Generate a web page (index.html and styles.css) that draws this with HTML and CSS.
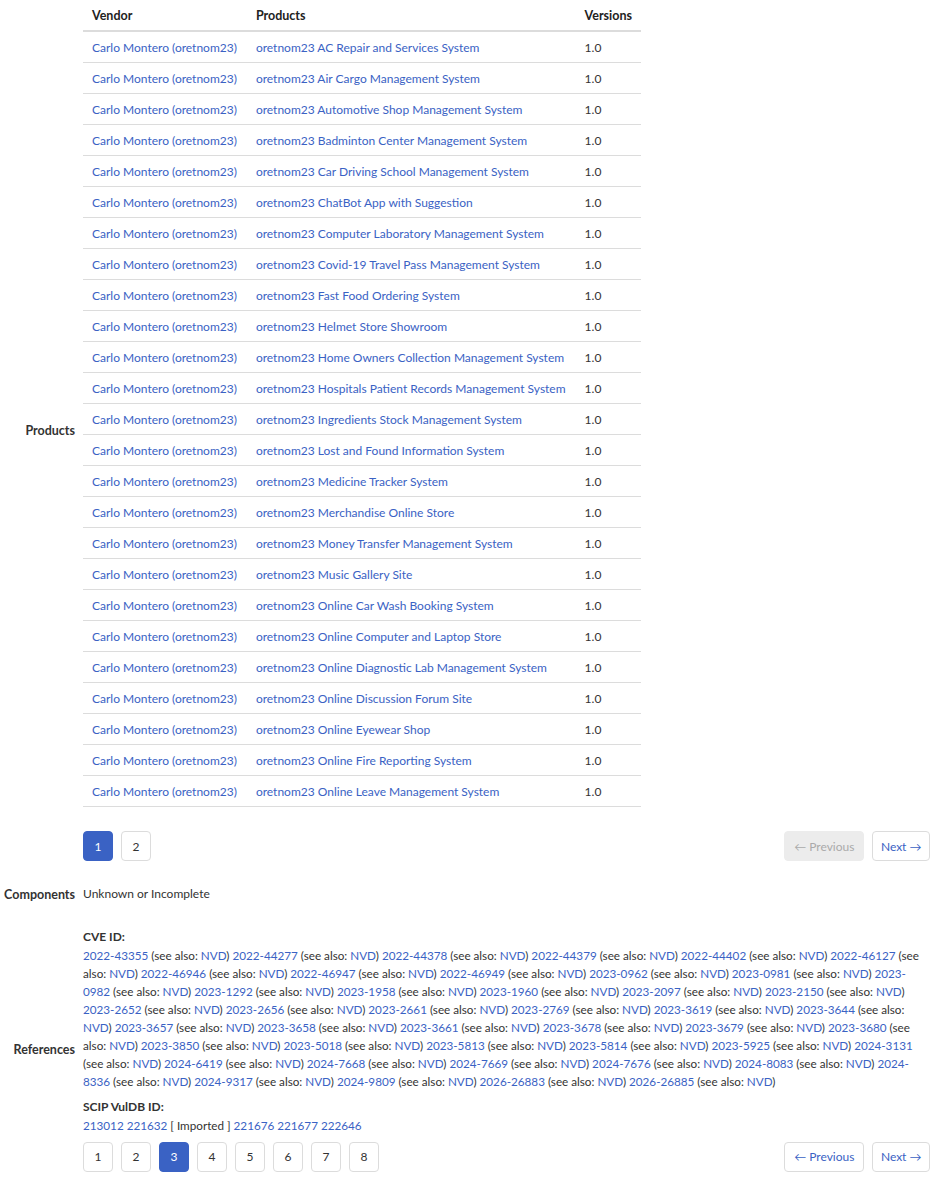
FILE: index.html
```html
<!DOCTYPE html>
<html>
<head>
<meta charset="utf-8">
<link rel="stylesheet" href="styles.css">
</head>
<body>
<div class="details">
  <div class="label">Products</div>
  <div class="value">
    <table class="products">
      <thead>
        <tr><th class="c-vendor">Vendor</th><th class="c-product">Products</th><th class="c-version">Versions</th></tr>
      </thead>
      <tbody>
        <tr><td><a href="#">Carlo Montero (oretnom23)</a></td><td><a href="#">oretnom23 AC Repair and Services System</a></td><td>1.0</td></tr>
        <tr><td><a href="#">Carlo Montero (oretnom23)</a></td><td><a href="#">oretnom23 Air Cargo Management System</a></td><td>1.0</td></tr>
        <tr><td><a href="#">Carlo Montero (oretnom23)</a></td><td><a href="#">oretnom23 Automotive Shop Management System</a></td><td>1.0</td></tr>
        <tr><td><a href="#">Carlo Montero (oretnom23)</a></td><td><a href="#">oretnom23 Badminton Center Management System</a></td><td>1.0</td></tr>
        <tr><td><a href="#">Carlo Montero (oretnom23)</a></td><td><a href="#">oretnom23 Car Driving School Management System</a></td><td>1.0</td></tr>
        <tr><td><a href="#">Carlo Montero (oretnom23)</a></td><td><a href="#">oretnom23 ChatBot App with Suggestion</a></td><td>1.0</td></tr>
        <tr><td><a href="#">Carlo Montero (oretnom23)</a></td><td><a href="#">oretnom23 Computer Laboratory Management System</a></td><td>1.0</td></tr>
        <tr><td><a href="#">Carlo Montero (oretnom23)</a></td><td><a href="#">oretnom23 Covid-19 Travel Pass Management System</a></td><td>1.0</td></tr>
        <tr><td><a href="#">Carlo Montero (oretnom23)</a></td><td><a href="#">oretnom23 Fast Food Ordering System</a></td><td>1.0</td></tr>
        <tr><td><a href="#">Carlo Montero (oretnom23)</a></td><td><a href="#">oretnom23 Helmet Store Showroom</a></td><td>1.0</td></tr>
        <tr><td><a href="#">Carlo Montero (oretnom23)</a></td><td><a href="#">oretnom23 Home Owners Collection Management System</a></td><td>1.0</td></tr>
        <tr><td><a href="#">Carlo Montero (oretnom23)</a></td><td><a href="#">oretnom23 Hospitals Patient Records Management System</a></td><td>1.0</td></tr>
        <tr><td><a href="#">Carlo Montero (oretnom23)</a></td><td><a href="#">oretnom23 Ingredients Stock Management System</a></td><td>1.0</td></tr>
        <tr><td><a href="#">Carlo Montero (oretnom23)</a></td><td><a href="#">oretnom23 Lost and Found Information System</a></td><td>1.0</td></tr>
        <tr><td><a href="#">Carlo Montero (oretnom23)</a></td><td><a href="#">oretnom23 Medicine Tracker System</a></td><td>1.0</td></tr>
        <tr><td><a href="#">Carlo Montero (oretnom23)</a></td><td><a href="#">oretnom23 Merchandise Online Store</a></td><td>1.0</td></tr>
        <tr><td><a href="#">Carlo Montero (oretnom23)</a></td><td><a href="#">oretnom23 Money Transfer Management System</a></td><td>1.0</td></tr>
        <tr><td><a href="#">Carlo Montero (oretnom23)</a></td><td><a href="#">oretnom23 Music Gallery Site</a></td><td>1.0</td></tr>
        <tr><td><a href="#">Carlo Montero (oretnom23)</a></td><td><a href="#">oretnom23 Online Car Wash Booking System</a></td><td>1.0</td></tr>
        <tr><td><a href="#">Carlo Montero (oretnom23)</a></td><td><a href="#">oretnom23 Online Computer and Laptop Store</a></td><td>1.0</td></tr>
        <tr><td><a href="#">Carlo Montero (oretnom23)</a></td><td><a href="#">oretnom23 Online Diagnostic Lab Management System</a></td><td>1.0</td></tr>
        <tr><td><a href="#">Carlo Montero (oretnom23)</a></td><td><a href="#">oretnom23 Online Discussion Forum Site</a></td><td>1.0</td></tr>
        <tr><td><a href="#">Carlo Montero (oretnom23)</a></td><td><a href="#">oretnom23 Online Eyewear Shop</a></td><td>1.0</td></tr>
        <tr><td><a href="#">Carlo Montero (oretnom23)</a></td><td><a href="#">oretnom23 Online Fire Reporting System</a></td><td>1.0</td></tr>
        <tr><td><a href="#">Carlo Montero (oretnom23)</a></td><td><a href="#">oretnom23 Online Leave Management System</a></td><td>1.0</td></tr>
      </tbody>
    </table>
    <div class="pager">
      <div class="pages">
        <a class="page active" href="#">1</a>
        <a class="page" href="#">2</a>
      </div>
      <div class="nav">
        <span class="navbtn disabled">← Previous</span>
        <a class="navbtn next" href="#">Next →</a>
      </div>
    </div>
  </div>

  <div class="label">Components</div>
  <div class="value plain">Unknown or Incomplete</div>

  <div class="label">References</div>
  <div class="value refs">
    <div class="ref-title">CVE ID:</div>
    <div class="ref-list"><a href="#">2022-43355</a> (see also: <a href="#">NVD</a>) <a href="#">2022-44277</a> (see also: <a href="#">NVD</a>) <a href="#">2022-44378</a> (see also: <a href="#">NVD</a>) <a href="#">2022-44379</a> (see also: <a href="#">NVD</a>) <a href="#">2022-44402</a> (see also: <a href="#">NVD</a>) <a href="#">2022-46127</a> (see also: <a href="#">NVD</a>) <a href="#">2022-46946</a> (see also: <a href="#">NVD</a>) <a href="#">2022-46947</a> (see also: <a href="#">NVD</a>) <a href="#">2022-46949</a> (see also: <a href="#">NVD</a>) <a href="#">2023-0962</a> (see also: <a href="#">NVD</a>) <a href="#">2023-0981</a> (see also: <a href="#">NVD</a>) <a href="#">2023-0982</a> (see also: <a href="#">NVD</a>) <a href="#">2023-1292</a> (see also: <a href="#">NVD</a>) <a href="#">2023-1958</a> (see also: <a href="#">NVD</a>) <a href="#">2023-1960</a> (see also: <a href="#">NVD</a>) <a href="#">2023-2097</a> (see also: <a href="#">NVD</a>) <a href="#">2023-2150</a> (see also: <a href="#">NVD</a>) <a href="#">2023-2652</a> (see also: <a href="#">NVD</a>) <a href="#">2023-2656</a> (see also: <a href="#">NVD</a>) <a href="#">2023-2661</a> (see also: <a href="#">NVD</a>) <a href="#">2023-2769</a> (see also: <a href="#">NVD</a>) <a href="#">2023-3619</a> (see also: <a href="#">NVD</a>) <a href="#">2023-3644</a> (see also: <a href="#">NVD</a>) <a href="#">2023-3657</a> (see also: <a href="#">NVD</a>) <a href="#">2023-3658</a> (see also: <a href="#">NVD</a>) <a href="#">2023-3661</a> (see also: <a href="#">NVD</a>) <a href="#">2023-3678</a> (see also: <a href="#">NVD</a>) <a href="#">2023-3679</a> (see also: <a href="#">NVD</a>) <a href="#">2023-3680</a> (see also: <a href="#">NVD</a>) <a href="#">2023-3850</a> (see also: <a href="#">NVD</a>) <a href="#">2023-5018</a> (see also: <a href="#">NVD</a>) <a href="#">2023-5813</a> (see also: <a href="#">NVD</a>) <a href="#">2023-5814</a> (see also: <a href="#">NVD</a>) <a href="#">2023-5925</a> (see also: <a href="#">NVD</a>) <a href="#">2024-3131</a> (see also: <a href="#">NVD</a>) <a href="#">2024-6419</a> (see also: <a href="#">NVD</a>) <a href="#">2024-7668</a> (see also: <a href="#">NVD</a>) <a href="#">2024-7669</a> (see also: <a href="#">NVD</a>) <a href="#">2024-7676</a> (see also: <a href="#">NVD</a>) <a href="#">2024-8083</a> (see also: <a href="#">NVD</a>) <a href="#">2024-8336</a> (see also: <a href="#">NVD</a>) <a href="#">2024-9317</a> (see also: <a href="#">NVD</a>) <a href="#">2024-9809</a> (see also: <a href="#">NVD</a>) <a href="#">2026-26883</a> (see also: <a href="#">NVD</a>) <a href="#">2026-26885</a> (see also: <a href="#">NVD</a>)</div>
    <div class="ref-title scip">SCIP VulDB ID:</div>
    <div class="ref-list"><a href="#">213012</a> <a href="#">221632</a> [ Imported ] <a href="#">221676</a> <a href="#">221677</a> <a href="#">222646</a></div>
    <div class="pager pager-refs">
      <div class="pages">
        <a class="page" href="#">1</a>
        <a class="page" href="#">2</a>
        <a class="page active" href="#">3</a>
        <a class="page" href="#">4</a>
        <a class="page" href="#">5</a>
        <a class="page" href="#">6</a>
        <a class="page" href="#">7</a>
        <a class="page" href="#">8</a>
      </div>
      <div class="nav">
        <a class="navbtn" href="#">← Previous</a>
        <a class="navbtn next" href="#">Next →</a>
      </div>
    </div>
  </div>
</div>
</body>
</html>
```

FILE: styles.css
```css
html, body {
  margin: 0;
  padding: 0;
  background: #fff;
}

body {
  font-family: "Lato", "Open Sans", sans-serif;
  font-size: 12px;
  color: #333;
  width: 930px;
}

a {
  color: #3a62c4;
  text-decoration: none;
}

.details {
  display: grid;
  grid-template-columns: 75px 1fr;
  column-gap: 8px;
  row-gap: 24px;
}

.label {
  align-self: center;
  text-align: right;
  font-weight: bold;
  font-size: 12.5px;
  color: #333;
}

.value {
  min-width: 0;
}

.plain {
  line-height: 18px;
}

.products {
  border-collapse: collapse;
  width: 558px;
}

.products th {
  text-align: left;
  font-weight: bold;
  font-size: 12.5px;
  color: #222;
  height: 30px;
  padding: 0 9px;
  border-bottom: 2px solid #dcdcdc;
}

.products td {
  height: 30px;
  padding: 0 9px;
  border-bottom: 1px solid #dcdcdc;
  line-height: 17px;
}

.c-vendor { width: 146px; }
.c-product { width: 311px; }

.pager {
  display: flex;
  justify-content: space-between;
  align-items: center;
  margin-top: 24px;
}

.pages, .nav {
  display: flex;
  gap: 8px;
}

.page, .navbtn {
  display: flex;
  align-items: center;
  justify-content: center;
  height: 28px;
  border: 1px solid #dcdcdc;
  border-radius: 4px;
  background: #fff;
  color: #333;
}

.page {
  width: 28px;
}

.page.active {
  background: #3a62c4;
  border-color: #3a62c4;
  color: #fff;
}

.navbtn {
  padding: 0 9px;
  color: #3a62c4;
}

.navbtn.next {
  padding: 0 7.5px;
}

.navbtn.disabled {
  background: #ececec;
  border-color: #ececec;
  color: #aaa;
}

.refs {
  line-height: 18px;
  padding-top: 1px;
}

.ref-title {
  font-weight: bold;
  color: #333;
}

.ref-list {
  font-size: 11.7px;
}

.ref-title.scip {
  margin-top: 8px;
}

.pager-refs {
  margin-top: 8px;
}
```
